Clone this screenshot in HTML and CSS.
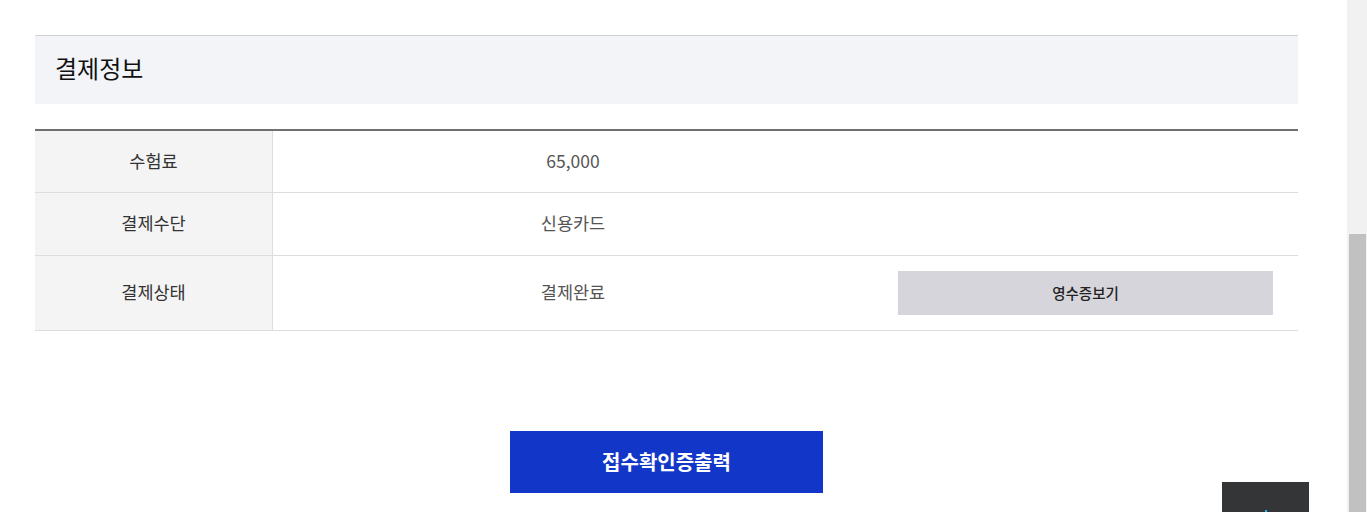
FILE: index.html
```html
<!DOCTYPE html>
<html lang="ko">
<head>
<meta charset="utf-8">
<link rel="stylesheet" href="styles.css">
</head>
<body>
<main class="page">
  <section class="pay">
    <h2 class="pay-title">결제정보</h2>
    <div class="pay-table">
      <div class="row row-first">
        <div class="label">수험료</div>
        <div class="value">65,000</div>
        <div class="extra"></div>
      </div>
      <div class="row">
        <div class="label">결제수단</div>
        <div class="value">신용카드</div>
        <div class="extra"></div>
      </div>
      <div class="row row-tall">
        <div class="label">결제상태</div>
        <div class="value">결제완료</div>
        <div class="extra"><button class="receipt">영수증보기</button></div>
      </div>
    </div>
    <div class="actions">
      <button class="print">접수확인증출력</button>
    </div>
  </section>
</main>
<div class="top-btn">
  <svg width="20" height="20" viewBox="0 0 20 20"><path d="M10 2 L10 18" stroke="#29b6e8" stroke-width="2"/></svg>
</div>
<div class="scrollbar"><div class="thumb"></div></div>
</body>
</html>
```
FILE: styles.css
```css
html, body {
  margin: 0;
  padding: 0;
  height: 512px;
  overflow: hidden;
  background: #fff;
  font-family: "Noto Sans CJK KR", "Noto Sans", sans-serif;
}
.page {
  width: 1347px;
  padding-top: 35px;
}
.pay {
  margin-left: 35px;
  width: 1263px;
}
.pay-title {
  margin: 0;
  height: 68px;
  border-top: 1px solid #cfd0d4;
  background: #f3f4f8;
  padding-left: 20px;
  font-size: 24px;
  font-weight: 400;
  color: #111;
  line-height: 63px;
}
.pay-table {
  margin-top: 25px;
  border-top: 2px solid #707070;
}
.row {
  display: grid;
  grid-template-columns: 238px 600px 1fr;
  height: 62px;
  border-bottom: 1px solid #dddddd;
}
.row-first {
  height: 61px;
}
.row-tall {
  height: 74px;
}
.label {
  background: #f4f4f4;
  border-right: 1px solid #dddddd;
  display: flex;
  align-items: center;
  justify-content: center;
  padding-bottom: 3px;
  font-size: 17.5px;
  color: #333;
}
.value {
  display: flex;
  align-items: center;
  justify-content: center;
  padding-bottom: 3px;
  font-size: 17.5px;
  color: #555;
}
.extra {
  display: flex;
  align-items: center;
  padding: 0 25px;
}
.receipt {
  width: 100%;
  height: 44px;
  border: none;
  background: #d6d5db;
  font-family: "Noto Sans CJK KR", sans-serif;
  font-size: 14.5px;
  font-weight: 500;
  color: #222;
  padding: 0 0 2px;
}
.actions {
  display: flex;
  justify-content: center;
  padding-top: 100px;
}
.print {
  width: 313px;
  height: 62px;
  border: none;
  background: #1237c8;
  color: #fff;
  font-family: "Noto Sans CJK KR", sans-serif;
  font-size: 20px;
  font-weight: 700;
  padding: 0 0 2px;
}
.top-btn {
  position: fixed;
  left: 1222px;
  top: 482px;
  width: 87px;
  height: 60px;
  background: #333537;
  display: flex;
  justify-content: center;
  padding-top: 26px;
  box-sizing: border-box;
}
.scrollbar {
  position: fixed;
  left: 1347px;
  top: 0;
  width: 20px;
  height: 512px;
  background: #f1f1f1;
}
.thumb {
  position: absolute;
  left: 2px;
  top: 234px;
  width: 17px;
  height: 278px;
  background: #c1c1c1;
}
```
